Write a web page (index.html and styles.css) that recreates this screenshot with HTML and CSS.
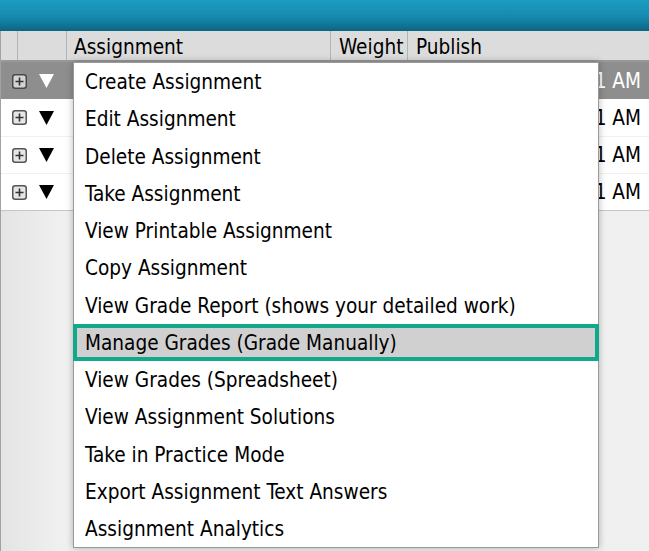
FILE: index.html
```html
<!DOCTYPE html>
<html>
<head>
<meta charset="utf-8">
<link rel="stylesheet" href="styles.css">
</head>
<body>
<div class="topbar"></div>
<div class="page">
  <div class="head">
    <div class="hc c1"></div>
    <div class="hc c2"></div>
    <div class="hc c3">Assignment</div>
    <div class="hc c4">Weight</div>
    <div class="hc c5">Publish</div>
  </div>
  <div class="row sel">
    <svg class="plus" viewBox="0 0 15 15" width="15" height="15"><rect x="0.75" y="0.75" width="13.5" height="13.5" rx="2.5" fill="#d4d4d4" stroke="#4a4a4a" stroke-width="1.5"/><path d="M7.5 3.5v8M3.5 7.5h8" stroke="#333" stroke-width="1.6"/></svg>
    <svg class="tri" viewBox="0 0 15 14" width="15" height="14"><polygon points="0,0 15,0 7.5,14" fill="#fff"/></svg>
    <span class="time">11:01 AM</span>
  </div>
  <div class="row">
    <svg class="plus" viewBox="0 0 15 15" width="15" height="15"><rect x="0.75" y="0.75" width="13.5" height="13.5" rx="2.5" fill="#e6e6e6" stroke="#555" stroke-width="1.5"/><path d="M7.5 3.5v8M3.5 7.5h8" stroke="#333" stroke-width="1.6"/></svg>
    <svg class="tri" viewBox="0 0 15 14" width="15" height="14"><polygon points="0,0 15,0 7.5,14" fill="#000"/></svg>
    <span class="time">11:01 AM</span>
  </div>
  <div class="row">
    <svg class="plus" viewBox="0 0 15 15" width="15" height="15"><rect x="0.75" y="0.75" width="13.5" height="13.5" rx="2.5" fill="#e6e6e6" stroke="#555" stroke-width="1.5"/><path d="M7.5 3.5v8M3.5 7.5h8" stroke="#333" stroke-width="1.6"/></svg>
    <svg class="tri" viewBox="0 0 15 14" width="15" height="14"><polygon points="0,0 15,0 7.5,14" fill="#000"/></svg>
    <span class="time">11:01 AM</span>
  </div>
  <div class="row last">
    <svg class="plus" viewBox="0 0 15 15" width="15" height="15"><rect x="0.75" y="0.75" width="13.5" height="13.5" rx="2.5" fill="#e6e6e6" stroke="#555" stroke-width="1.5"/><path d="M7.5 3.5v8M3.5 7.5h8" stroke="#333" stroke-width="1.6"/></svg>
    <svg class="tri" viewBox="0 0 15 14" width="15" height="14"><polygon points="0,0 15,0 7.5,14" fill="#000"/></svg>
    <span class="time">11:01 AM</span>
  </div>
</div>
<div class="menu">
  <div class="item">Create Assignment</div>
  <div class="item">Edit Assignment</div>
  <div class="item">Delete Assignment</div>
  <div class="item">Take Assignment</div>
  <div class="item">View Printable Assignment</div>
  <div class="item">Copy Assignment</div>
  <div class="item">View Grade Report (shows your detailed work)</div>
  <div class="item hl">Manage Grades (Grade Manually)</div>
  <div class="item">View Grades (Spreadsheet)</div>
  <div class="item">View Assignment Solutions</div>
  <div class="item">Take in Practice Mode</div>
  <div class="item">Export Assignment Text Answers</div>
  <div class="item">Assignment Analytics</div>
</div>
</body>
</html>
```
FILE: styles.css
```css
html, body {
  margin: 0;
  padding: 0;
}
body {
  width: 649px;
  height: 551px;
  overflow: hidden;
  position: relative;
  background: #efefef;
  font-family: "DejaVu Sans Condensed", "DejaVu Sans", sans-serif;
  font-size: 20.6px;
  color: #000;
}
.topbar {
  height: 31px;
  background: linear-gradient(#1c9cc2 0%, #168aae 55%, #0c6482 100%);
}
.page {
  border-left: 1px solid #a2a2a2;
  height: 520px;
  background: linear-gradient(90deg, #e4e4e4 0px, #f0f0f0 60px, #f0f0f0 100%);
}
.head {
  display: flex;
  height: 29px;
  background: #dcdcdc;
  border-bottom: 2px solid #999;
}
.hc {
  border-right: 1px solid #b4b4b4;
  line-height: 32px;
  padding-left: 7px;
  box-sizing: border-box;
  white-space: nowrap;
}
.c1 { width: 17px; padding: 0; }
.c2 { width: 49px; padding: 0; }
.c3 { width: 264px; }
.c4 { width: 77px; padding-left: 8px; }
.c5 { flex: 1; border-right: none; padding-left: 8px; }
.row {
  display: flex;
  align-items: center;
  height: 37.25px;
  background: #fff;
  padding-left: 11px;
  padding-top: 1px;
  border-bottom: 1px solid #f0f0f0;
  box-sizing: border-box;
}
.row.sel {
  background: #8e8e8e;
  color: #fff;
  border-bottom: none;
}
.row.last {
  border-bottom: 1px solid #c6c6c6;
}
.plus { flex: none; }
.tri { flex: none; margin-left: 12px; }
.time {
  margin-left: auto;
  padding-right: 8px;
}
.menu {
  position: absolute;
  left: 73px;
  top: 62px;
  width: 524px;
  background: #fff;
  border: 1px solid #9a9a9a;
  box-shadow: 0 0 7px rgba(0,0,0,0.28);
}
.item {
  height: 37.25px;
  line-height: 38px;
  padding-left: 11px;
  white-space: nowrap;
  box-sizing: border-box;
}
.item.hl {
  margin: 0 -1px;
  border: 4px solid #12a98b;
  background: #d0d0d0;
  padding-left: 8px;
  line-height: 30px;
}
```
